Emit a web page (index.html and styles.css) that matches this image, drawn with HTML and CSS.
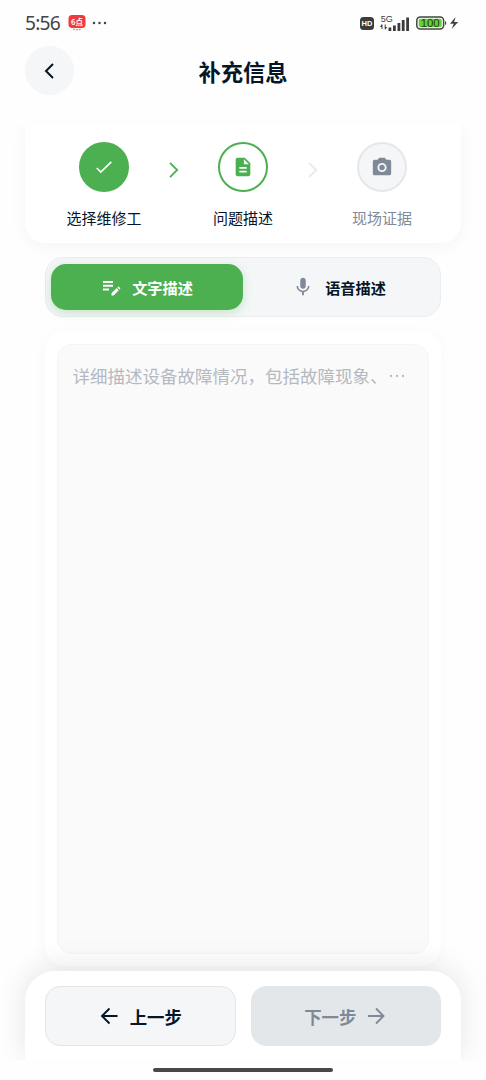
FILE: index.html
```html
<!DOCTYPE html>
<html lang="zh-CN">
<head>
<meta charset="utf-8">
<title>补充信息</title>
<link rel="stylesheet" href="styles.css">
</head>
<body>
<div class="status">
  <span class="time">5:56</span>
  <svg class="app" width="18" height="16" viewBox="0 0 18 16"><path d="M4 0h10q3.500 0 3.500 3.500v6q0 3-3 3.500H3.500q-3-.5-3-3.500v-6Q.5 0 4 0z" fill="#ef3a40"/><path d="M5 14q4 1.500 8 0" fill="none" stroke="#f3777b" stroke-width="1.200" stroke-dasharray="2 1"/><text x="9" y="9.800" text-anchor="middle" class="app-text">6点</text></svg>
  <svg class="dots" width="16" height="4" viewBox="0 0 16 4" fill="#444"><circle cx="2" cy="2" r="1.250"/><circle cx="7.500" cy="2" r="1.250"/><circle cx="13" cy="2" r="1.250"/></svg>
  <div class="status-right">
    <span class="hd">HD</span>
    <svg width="30" height="18" viewBox="0 0 30 18" fill="#3c3c3c"><text x=".8" y="8" class="net">5G</text><path d="M2 10.500v4.500M5.200 10.500v4.500" stroke="#3c3c3c" stroke-width="1"/><path d="M0 13l2-3v3zM7.200 13l-2 3v-3z"/><path d="M8.500 13.500h2.800V17H8.500zM13 11.500h2.800V17H13zM17.500 9h2.800v8h-2.800zM21.800 6h2.800v11h-2.800zM26.200 3.500H29V17h-2.800z"/></svg>
    <svg class="battery" width="44" height="16" viewBox="0 0 44 16"><rect x=".8" y="1.900" width="26.800" height="12.200" rx="3.500" fill="#fff" stroke="#444" stroke-width="1.500"/><rect x="2.700" y="3.800" width="23" height="8.400" rx="1.800" fill="#65d139"/><path d="M29 5.700q2.500 2.300 0 4.600z" fill="#444"/><text x="14.200" y="12" text-anchor="middle" class="level" textLength="19" lengthAdjust="spacingAndGlyphs">100</text><path d="M39.500 2l-5.500 6.700h3.700l-2 5.300 6.500-7h-4z" fill="#444"/></svg>
  </div>
</div>
<header class="header">
  <button class="back" aria-label="返回"><svg width="24" height="24" viewBox="0 0 24 24"><path d="M15 5l-7 7 7 7" class="line"/></svg></button>
  <h1 class="title">补充信息</h1>
</header>
<main class="content">
  <section class="steps">
    <div class="step">
      <div class="circle done"><svg width="20" height="20" viewBox="0 0 20 20"><path d="M2.800 11l4 4L17.300 4.800" fill="none" stroke="#fff" stroke-width="1.700"/></svg></div>
      <span>选择维修工</span>
    </div>
    <svg class="chevron" width="12" height="18" viewBox="0 0 12 18"><path d="M2 1.800l7.200 7.200L2 16.200"/></svg>
    <div class="step">
      <div class="circle current"><svg width="22" height="22" viewBox="0 0 24 24" fill="#4caf50"><path d="M14 2H6c-1.100 0-2 .9-2 2v16c0 1.100.9 2 2 2h12c1.100 0 2-.9 2-2V8l-6-6zm2 16H8v-2h8v2zm0-4H8v-2h8v2zm-3-5V3.500L18.500 9H13z"/></svg></div>
      <span>问题描述</span>
    </div>
    <svg class="chevron next" width="12" height="18" viewBox="0 0 12 18"><path d="M2 1.800l7.200 7.200L2 16.200"/></svg>
    <div class="step pending">
      <div class="circle"><svg width="22" height="22" viewBox="0 0 24 24" fill="#7f8997"><path d="M9 2L7.200 4H4c-1.100 0-2 .9-2 2v13c0 1.100.9 2 2 2h16c1.100 0 2-.9 2-2V6c0-1.100-.9-2-2-2h-3.200L15 2H9z"/><circle cx="12" cy="12.500" r="4" fill="none" stroke="#f4f6f8" stroke-width="2"/></svg></div>
      <span>现场证据</span>
    </div>
  </section>
  <div class="tabs">
    <button class="tab active"><svg width="20" height="20" viewBox="0 0 20 20" fill="#fff"><path d="M2 4h10v2H2zM2 7.800h10v2H2zM2 11.600h6v2H2zM10.500 16.300l5.200-5.200 2.100 2.100-5.200 5.200h-2.100zM16.400 10.400l.6-.6q.5-.4.900 0l1.200 1.200q.4.500 0 .9l-.6.600z"/></svg>文字描述</button>
    <button class="tab"><svg width="22" height="22" viewBox="0 0 24 24" fill="#7f8997"><path d="M12 14c1.700 0 3-1.300 3-3V5c0-1.700-1.300-3-3-3S9 3.300 9 5v6c0 1.700 1.300 3 3 3zm5.300-3c0 3-2.500 5.100-5.300 5.100S6.700 14 6.700 11H5c0 3.400 2.700 6.200 6 6.700V21h2v-3.300c3.300-.5 6-3.300 6-6.700h-1.700z"/></svg>语音描述</button>
  </div>
  <section class="panel"><div class="input">详细描述设备故障情况，包括故障现象、<svg width="18" height="4" viewBox="0 0 18 4" fill="#b4b9c1"><circle cx="3" cy="2" r="1.150"/><circle cx="9" cy="2" r="1.150"/><circle cx="15" cy="2" r="1.150"/></svg></div></section>
</main>
<footer class="footer">
  <div class="actions">
    <button class="action"><svg width="20" height="20" viewBox="0 0 20 20"><path d="M18.500 10H3M10.500 2.500L3 10l7.500 7.500" class="line"/></svg>上一步</button>
    <button class="action disabled">下一步<svg width="20" height="20" viewBox="0 0 20 20"><path d="M1 10h15.500M9 2.500l7.500 7.500L9 17.500" class="line"/></svg></button>
  </div>
</footer>
<div class="home"></div>
</body>
</html>
```
FILE: styles.css
```css
* { box-sizing: border-box; }
body {
  margin: 0;
  height: 1080px;
  display: flex;
  flex-direction: column;
  overflow: hidden;
  background: #fefefe;
  color: #061629;
  font-family: "Noto Sans CJK SC", sans-serif;
}
button {
  border: 0;
  padding: 0;
  font: inherit;
  color: inherit;
  background: none;
}
svg { flex: none; }
.line { fill: none; stroke: currentColor; stroke-width: 2; }

.status {
  height: 46px;
  padding: 0 26px 0 25px;
  display: flex;
  align-items: center;
}
.time { width: 43px; font: 19.2px/24px "Noto Sans", sans-serif; letter-spacing: -.8px; color: #444; }
.app-text { font: bold 7.5px "Noto Sans CJK SC", sans-serif; fill: #fff; }
.dots { margin-left: 6px; }
.status-right { margin-left: auto; display: flex; align-items: center; }
.hd {
  width: 14px;
  height: 13px;
  margin-right: 6px;
  border-radius: 3.5px;
  background: #3c3c3c;
  color: #fff;
  font: bold 7.5px/13px "Liberation Sans", sans-serif;
  text-align: center;
}
.net { font: 9px "Liberation Sans", sans-serif; }
.battery { margin-left: 6px; }
.level { font: 10.5px "Liberation Sans", sans-serif; fill: #233b19; }

.header {
  height: 50px;
  flex: none;
  padding: 0 25px;
  display: grid;
  grid-template-columns: 49px 1fr 49px;
  align-items: start;
}
.back {
  width: 49px;
  height: 49px;
  border-radius: 50%;
  background: #f4f6f8;
  display: grid;
  place-items: center;
}
.title { margin: 0; text-align: center; font-size: 22.3px; font-weight: 700; line-height: 50px; }

.content {
  flex: 1;
  margin: 28px 0 -89px;
  padding: 0 25px;
  overflow: hidden;
  display: flex;
  flex-direction: column;
}
.steps {
  height: 119px;
  flex: none;
  padding: 18px 35px 0;
  display: flex;
  justify-content: space-between;
  border-radius: 0 0 20px 20px;
  background: #fff;
  box-shadow: 0 3px 18px rgba(0, 0, 0, .045);
}
.step {
  width: 88px;
  display: flex;
  flex-direction: column;
  align-items: center;
  font-size: 15px;
  line-height: 22px;
  gap: 15px;
}
.circle {
  width: 50px;
  height: 50px;
  border: 2px solid #e5e7ea;
  border-radius: 50%;
  background: #f4f6f8;
  display: grid;
  place-items: center;
}
.done { background: #4caf50; border-color: #4caf50; }
.current { background: #fff; border-color: #4caf50; }
.pending { color: #7f8997; }
.chevron { margin-top: 19px; fill: none; stroke: #4caf50; stroke-width: 1.8; }
.next { stroke: #e8eaec; }

.tabs {
  height: 60px;
  flex: none;
  margin: 14px 20px 0;
  padding: 6px 5px;
  display: grid;
  grid-template-columns: 1fr 1fr;
  border: 1px solid #ebedef;
  border-radius: 18px;
  background: #f4f6f8;
}
.tab {
  display: flex;
  align-items: center;
  justify-content: center;
  gap: 11px;
  border-radius: 15px;
  font-size: 15.2px;
  font-weight: 700;
}
.active { background: #4caf50; color: #fff; box-shadow: 0 3px 10px rgba(76, 175, 80, .25); }

.panel {
  height: 635px;
  flex: none;
  margin: 14px 20px 0;
  padding: 13px 12px 12px;
  border-radius: 20px;
  background: #fff;
  box-shadow: 0 2px 14px rgba(0, 0, 0, .03);
}
.input {
  height: 610px;
  padding: 18px 14.5px;
  border: 1px solid #f4f5f5;
  border-radius: 15px;
  background: #fafafa;
  color: #b4b9c1;
  font-size: 17.5px;
  line-height: 26px;
  white-space: nowrap;
  display: flex;
  align-items: flex-start;
}
.input svg { margin-top: 11px; }

.footer {
  height: 129px;
  padding: 40px 25px 0;
  flex: none;
  overflow: hidden;
  position: relative;
}
.actions {
  height: 90px;
  padding: 15px 20px;
  display: grid;
  grid-template-columns: 1fr 1fr;
  gap: 15px;
  border-radius: 30px 30px 0 0;
  background: #fff;
  box-shadow: 0 -4px 30px rgba(0, 0, 0, .1);
}
.action {
  display: flex;
  align-items: center;
  justify-content: center;
  gap: 11px;
  border: 1px solid #e2e6e8;
  border-radius: 15px;
  background: #f4f6f8;
  font-size: 17.4px;
  font-weight: 700;
}
.action .line { stroke-width: 1.9; }
.disabled { background: #e4e7ea; color: #7f8997; border-color: #e4e7ea; }
.home { width: 180px; height: 4px; flex: none; margin: 8px auto; border-radius: 2px; background: #484848; }
```
